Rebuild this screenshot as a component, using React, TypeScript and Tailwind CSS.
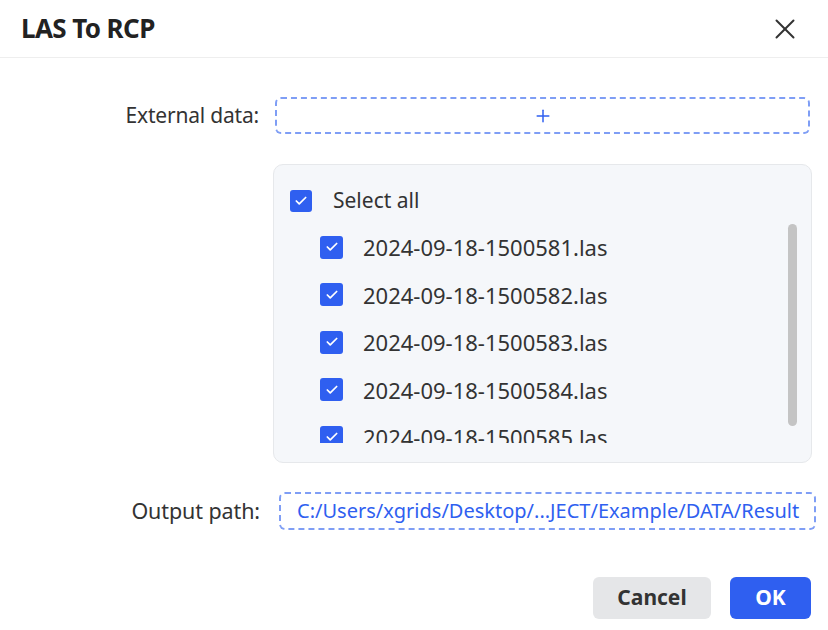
import { X, Plus, Check } from "lucide-react";

const files = [
  "2024-09-18-1500581.las",
  "2024-09-18-1500582.las",
  "2024-09-18-1500583.las",
  "2024-09-18-1500584.las",
  "2024-09-18-1500585.las",
];

const Box = ({ size = "w-[22px] h-[22px]" }: { size?: string }) => (
  <span
    className={`${size} shrink-0 rounded-[3px] bg-[#2f5ff0] flex items-center justify-center`}
  >
    <Check className="w-[14px] h-[14px] text-white" strokeWidth={3} />
  </span>
);

export default function App() {
  return (
    <div className="w-[828px] h-[630px] bg-white font-['Noto_Sans',sans-serif] text-[#333] overflow-hidden">
      {/* header */}
      <div className="h-[58px] flex items-center justify-between pl-[21px] pr-[26px] border-b border-[#eeeeee]">
        <h1 className="text-[26px] font-bold tracking-[-0.6px] text-[#222]">
          LAS To RCP
        </h1>
        <X className="w-[34px] h-[34px] text-[#333]" strokeWidth={1.4} />
      </div>

      <div className="flex flex-col pt-[39px]">
        <div className="flex items-center">
          <p className="w-[275px] shrink-0 pr-[16px] text-right text-[21px] tracking-[-0.2px] text-[#333]">
            External data:
          </p>
          <div className="w-[535px] h-[37px] border-2 border-dashed border-[#7f9ef5] rounded-[6px] flex items-center justify-center">
            <Plus className="w-[20px] h-[20px] text-[#2f5ff0]" strokeWidth={1.8} />
          </div>
        </div>

        <div className="ml-[273px] mt-[30px] w-[539px] h-[299px] bg-[#f5f7fa] border border-[#e6e8eb] rounded-[10px] flex flex-col pl-[16px] pt-[25px]">
          <div className="flex items-center gap-[21px] h-[22px]">
            <Box />
            <span className="text-[21px]">Select all</span>
          </div>
          <div className="flex">
            <div className="flex-1 h-[231px] overflow-hidden pt-[23px] pl-[30px] flex flex-col gap-[23.5px]">
              {files.map((f) => (
                <div key={f} className="flex items-center gap-[20px] h-[24px] shrink-0">
                  <Box size="w-[23px] h-[23px]" />
                  <span className="text-[22px] leading-[24px]">{f}</span>
                </div>
              ))}
            </div>
            <div className="w-[9px] h-[202px] mt-[12px] mr-[14px] rounded-full bg-[#c4c4c4]" />
          </div>
        </div>

        <div className="flex items-center mt-[29px]">
          <p className="w-[279px] shrink-0 pr-[19px] text-right text-[21.5px] tracking-[-0.1px] text-[#333]">
            Output path:
          </p>
          <div className="w-[537px] h-[38px] border-2 border-dashed border-[#7f9ef5] rounded-[6px] flex items-center pl-[16px]">
            <span className="text-[20px] text-[#2f5ff0] whitespace-nowrap">
              C:/Users/xgrids/Desktop/...JECT/Example/DATA/Result
            </span>
          </div>
        </div>

        <div className="flex justify-end gap-[19px] pr-[17px] mt-[47px]">
          <button className="w-[118px] h-[42px] rounded-[6px] bg-[#e5e6e8] text-[21px] font-bold text-[#333]">
            Cancel
          </button>
          <button className="w-[81px] h-[42px] rounded-[6px] bg-[#2f5ff0] text-[21px] font-bold text-white">
            OK
          </button>
        </div>
      </div>
    </div>
  );
}
